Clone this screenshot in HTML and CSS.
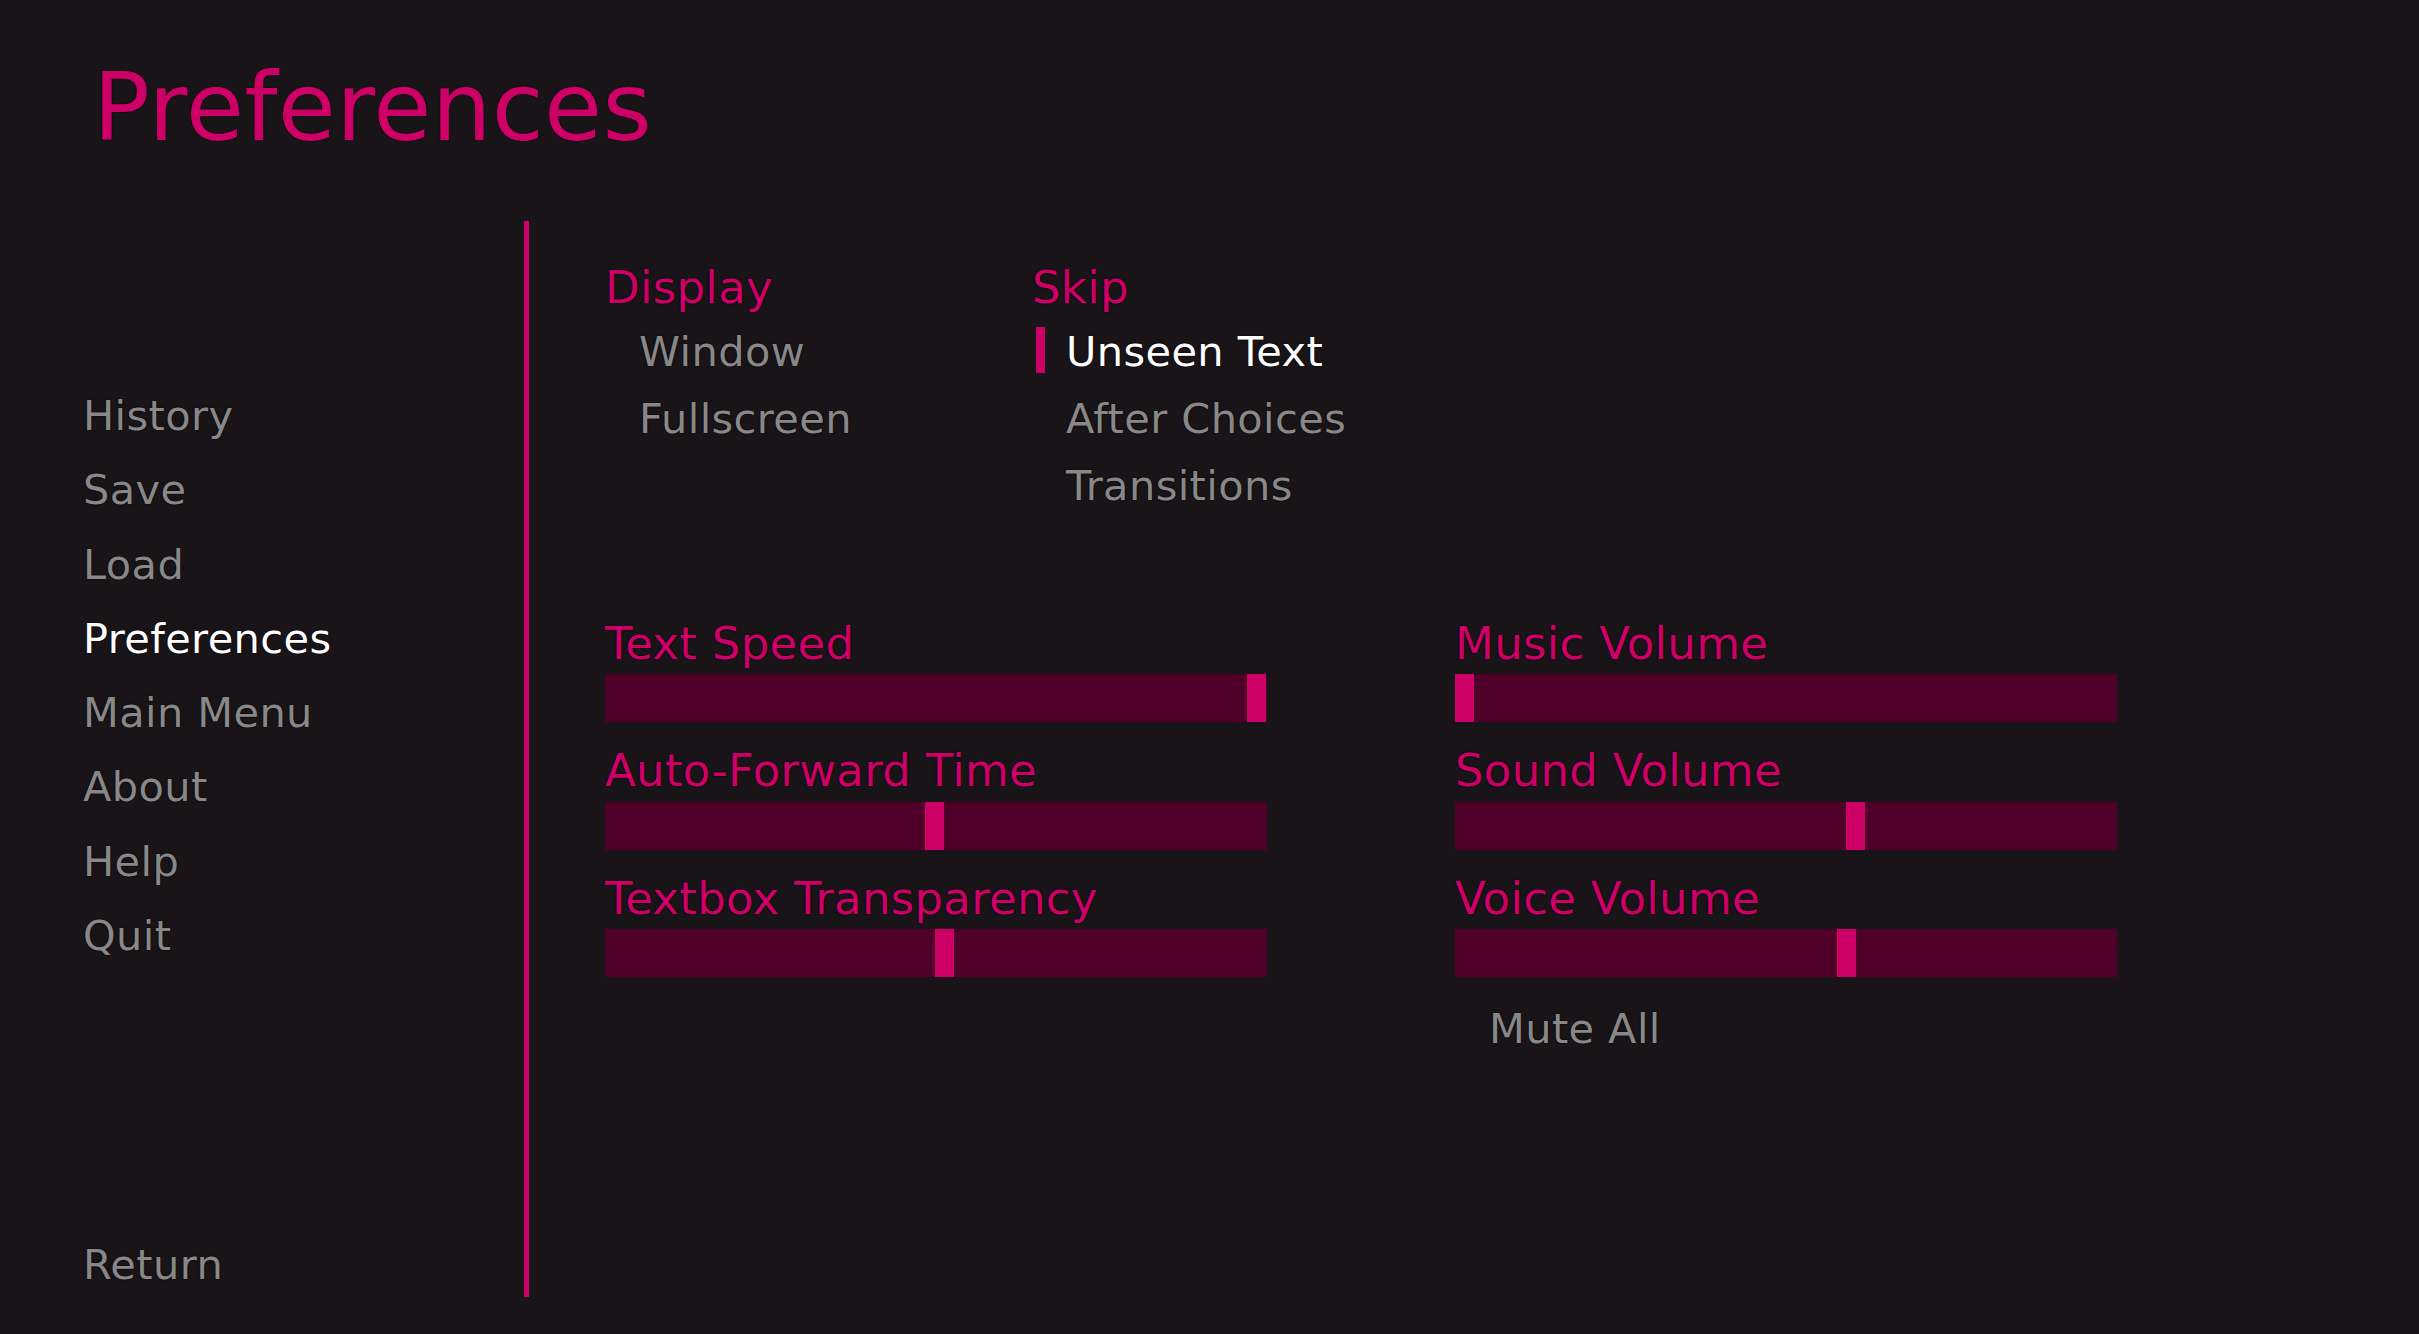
FILE: index.html
```html
<!DOCTYPE html>
<html lang="en">
<head>
    <meta charset="UTF-8">
    <meta name="viewport" content="width=device-width, initial-scale=1.0">
    <title>Preferences</title>
    <link rel="stylesheet" href="styles.css">
</head>
<body>
    <div class="screen">
        <h1 class="title">Preferences</h1>
        <div class="frame">
            <nav class="nav">
                <a class="nav-item">History</a>
                <a class="nav-item">Save</a>
                <a class="nav-item">Load</a>
                <a class="nav-item active">Preferences</a>
                <a class="nav-item">Main Menu</a>
                <a class="nav-item">About</a>
                <a class="nav-item">Help</a>
                <a class="nav-item">Quit</a>
                <a class="nav-item return">Return</a>
            </nav>
            <main class="prefs">
                <div class="radio-row">
                    <section class="radio-col">
                        <h2 class="pref-label">Display</h2>
                        <div class="pref-btn">Window</div>
                        <div class="pref-btn">Fullscreen</div>
                    </section>
                    <section class="radio-col">
                        <h2 class="pref-label">Skip</h2>
                        <div class="pref-btn selected">Unseen Text</div>
                        <div class="pref-btn">After Choices</div>
                        <div class="pref-btn">Transitions</div>
                    </section>
                </div>
                <div class="slider-grid">
                    <div class="slider-col">
                        <div class="slider">
                            <h2 class="pref-label">Text Speed</h2>
                            <div class="bar"><div class="thumb" style="margin-left: 642px"></div></div>
                        </div>
                        <div class="slider">
                            <h2 class="pref-label">Auto-Forward Time</h2>
                            <div class="bar"><div class="thumb" style="margin-left: 320px"></div></div>
                        </div>
                        <div class="slider">
                            <h2 class="pref-label">Textbox Transparency</h2>
                            <div class="bar"><div class="thumb" style="margin-left: 330px"></div></div>
                        </div>
                    </div>
                    <div class="slider-col">
                        <div class="slider">
                            <h2 class="pref-label">Music Volume</h2>
                            <div class="bar"><div class="thumb" style="margin-left: 0px"></div></div>
                        </div>
                        <div class="slider">
                            <h2 class="pref-label">Sound Volume</h2>
                            <div class="bar"><div class="thumb" style="margin-left: 391px"></div></div>
                        </div>
                        <div class="slider">
                            <h2 class="pref-label">Voice Volume</h2>
                            <div class="bar"><div class="thumb" style="margin-left: 382px"></div></div>
                        </div>
                        <div class="pref-btn mute">Mute All</div>
                    </div>
                </div>
            </main>
        </div>
    </div>
</body>
</html>
```

FILE: styles.css
```css
body {
    margin: 0;
    padding: 0;
    background-color: #191417;
    font-family: "DejaVu Sans", "Noto Sans", sans-serif;
}
.screen {
    width: 2419px;
    height: 1334px;
    display: flex;
    flex-direction: column;
    overflow: hidden;
}
.title {
    margin: 0 0 59px 0;
    padding: 52px 0 0 93px;
    font-size: 94.5px;
    line-height: 110px;
    font-weight: normal;
    letter-spacing: 0.3px;
    color: #cc0066;
    text-shadow: 0 0 2px #000;
}
.frame {
    display: flex;
    height: 1076px;
}
.nav {
    width: 524px;
    display: flex;
    flex-direction: column;
    padding: 158px 0 0 83px;
    box-sizing: border-box;
}
.nav-item {
    font-size: 41.5px;
    line-height: 74.27px;
    letter-spacing: 0.4px;
    color: #888888;
    text-shadow: 0 0 2px #000;
}
.nav-item.active {
    color: #ffffff;
}
.nav-item.return {
    margin-top: auto;
    line-height: 48px;
    margin-bottom: 7.9px;
}
.prefs {
    flex: 1;
    border-left: 5px solid #cc0066;
    padding: 39.4px 0 0 76px;
}
.radio-row {
    display: flex;
}
.radio-col {
    width: 427px;
}
.pref-label {
    margin: 0 0 13.1px 0;
    padding-top: 1.5px;
    font-size: 45px;
    line-height: 52px;
    font-weight: normal;
    letter-spacing: 0.3px;
    color: #cc0066;
    text-shadow: 0 0 2px #000;
}
.pref-btn {
    height: 46px;
    box-sizing: border-box;
    margin-left: 4px;
    border-left: 9px solid transparent;
    padding: 5.5px 0 0 21px;
    font-size: 41.5px;
    line-height: 40.5px;
    letter-spacing: 0.4px;
    color: #888888;
    text-shadow: 0 0 2px #000;
}
.pref-btn + .pref-btn {
    margin-top: 21px;
}
.pref-btn.selected {
    color: #ffffff;
    border-left-color: #cc0066;
}
.slider-grid {
    display: flex;
    gap: 188px;
    margin-top: 109.4px;
}
.slider-col {
    width: 662px;
}
.slider + .slider {
    margin-top: 22px;
}
.slider .pref-label {
    margin-bottom: 4.1px;
}
.bar {
    display: flex;
    height: 48px;
    background-color: #500028;
}
.thumb {
    width: 19px;
    height: 48px;
    background-color: #cc0066;
}
.pref-btn.mute {
    margin-top: 26.4px;
}
```
